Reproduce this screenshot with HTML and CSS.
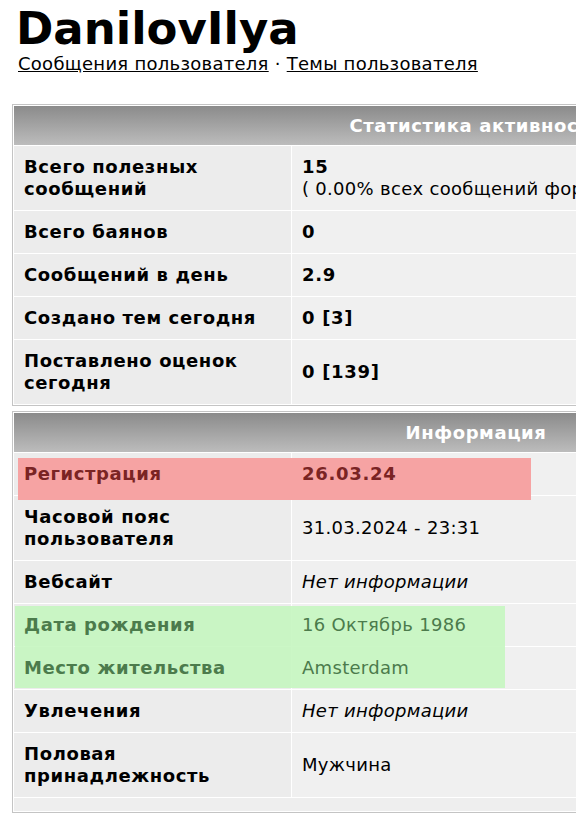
FILE: index.html
```html
<!DOCTYPE html>
<html lang="ru">
<head>
<meta charset="utf-8">
<title>DanilovIlya</title>
<link rel="stylesheet" href="styles.css">
</head>
<body>
<div class="profile-head">
  <h1 class="username">DanilovIlya</h1>
  <div class="user-links"><a href="#">Сообщения пользователя</a> · <a href="#">Темы пользователя</a></div>
</div>

<table class="ptable stats">
  <tr><th colspan="2">Статистика активности</th></tr>
  <tr><td class="lbl"><span class="t">Всего полезных сообщений</span></td><td class="val"><span class="t"><b>15</b><br>( 0.00% всех сообщений форума )</span></td></tr>
  <tr><td class="lbl"><span class="t">Всего баянов</span></td><td class="val"><span class="t"><b>0</b></span></td></tr>
  <tr><td class="lbl"><span class="t">Сообщений в день</span></td><td class="val"><span class="t"><b>2.9</b></span></td></tr>
  <tr><td class="lbl"><span class="t">Создано тем сегодня</span></td><td class="val"><span class="t"><b>0 [3]</b></span></td></tr>
  <tr><td class="lbl"><span class="t">Поставлено оценок сегодня</span></td><td class="val"><span class="t"><b>0 [139]</b></span></td></tr>
</table>

<table class="ptable info">
  <tr><th colspan="2">Информация</th></tr>
  <tr class="hl-red"><td class="lbl mark-red"><span class="t">Регистрация</span></td><td class="val"><span class="t"><b>26.03.24</b></span></td></tr>
  <tr><td class="lbl"><span class="t">Часовой пояс пользователя</span></td><td class="val"><span class="t">31.03.2024 - 23:31</span></td></tr>
  <tr><td class="lbl"><span class="t">Вебсайт</span></td><td class="val"><span class="t"><i>Нет информации</i></span></td></tr>
  <tr class="hl-green"><td class="lbl mark-green"><span class="t">Дата рождения</span></td><td class="val"><span class="t">16 Октябрь 1986</span></td></tr>
  <tr class="hl-green"><td class="lbl"><span class="t">Место жительства</span></td><td class="val"><span class="t">Amsterdam</span></td></tr>
  <tr><td class="lbl"><span class="t">Увлечения</span></td><td class="val"><span class="t"><i>Нет информации</i></span></td></tr>
  <tr><td class="lbl"><span class="t">Половая принадлежность</span></td><td class="val"><span class="t">Мужчина</span></td></tr>
  <tr><td class="filler" colspan="2"></td></tr>
</table>
</body>
</html>
```

FILE: styles.css
```css
html, body {
  margin: 0;
  padding: 0;
  background: #ffffff;
}
body {
  font-family: "DejaVu Sans", Verdana, sans-serif;
  font-size: 18px;
  color: #000;
}
.profile-head {
  padding-left: 16px;
}
.username {
  margin: 4px 0 0 0;
  font-size: 45px;
  line-height: 50px;
  font-weight: bold;
  color: #000;
}
.user-links {
  line-height: 20px;
  font-size: 18px;
  padding-left: 2px;
  letter-spacing: 0.27px;
}
.user-links a {
  color: #000;
  text-decoration: underline;
}
.ptable {
  width: 928px;
  margin-left: 12px;
  border: 1px solid #c4c4c4;
  border-collapse: separate;
  border-spacing: 1px;
  background: #ffffff;
  white-space: nowrap;
  letter-spacing: 0.3px;
}
.ptable b {
  letter-spacing: 0.7px;
}
.stats {
  margin-top: 30px;
}
.info {
  margin-top: 5px;
}
.ptable th {
  height: 39px;
  box-sizing: border-box;
  padding: 9px 10px 8px;
  line-height: 22px;
  font-size: 18px;
  font-weight: bold;
  letter-spacing: 0.6px;
  color: #ffffff;
  text-align: center;
  background: linear-gradient(to bottom, #8b8b8b, #bcbcbc);
}
.ptable td {
  box-sizing: border-box;
  padding: 10px 10px;
  line-height: 22px;
  vertical-align: middle;
}
.lbl {
  width: 277px;
  background: #ececec;
  font-weight: bold;
  letter-spacing: 0.6px;
  white-space: normal;
}
.val {
  background: #f0f0f0;
}
.t {
  position: relative;
}
.filler {
  height: 13px;
  padding: 0 !important;
  background: #eeeeee;
}
.mark-red,
.mark-green {
  position: relative;
}
.mark-red::before,
.mark-green::before {
  content: "";
  position: absolute;
}
.mark-red::before {
  left: 4px;
  top: 5px;
  width: 513px;
  height: 42px;
  background: #f6a3a3;
}
.mark-green::before {
  left: 1px;
  top: 2px;
  width: 490px;
  height: 82px;
  background: rgba(196, 246, 190, 0.88);
}
.hl-red .t {
  color: #7a2424;
}
.hl-green .t {
  color: #4c7b4c;
}
```
